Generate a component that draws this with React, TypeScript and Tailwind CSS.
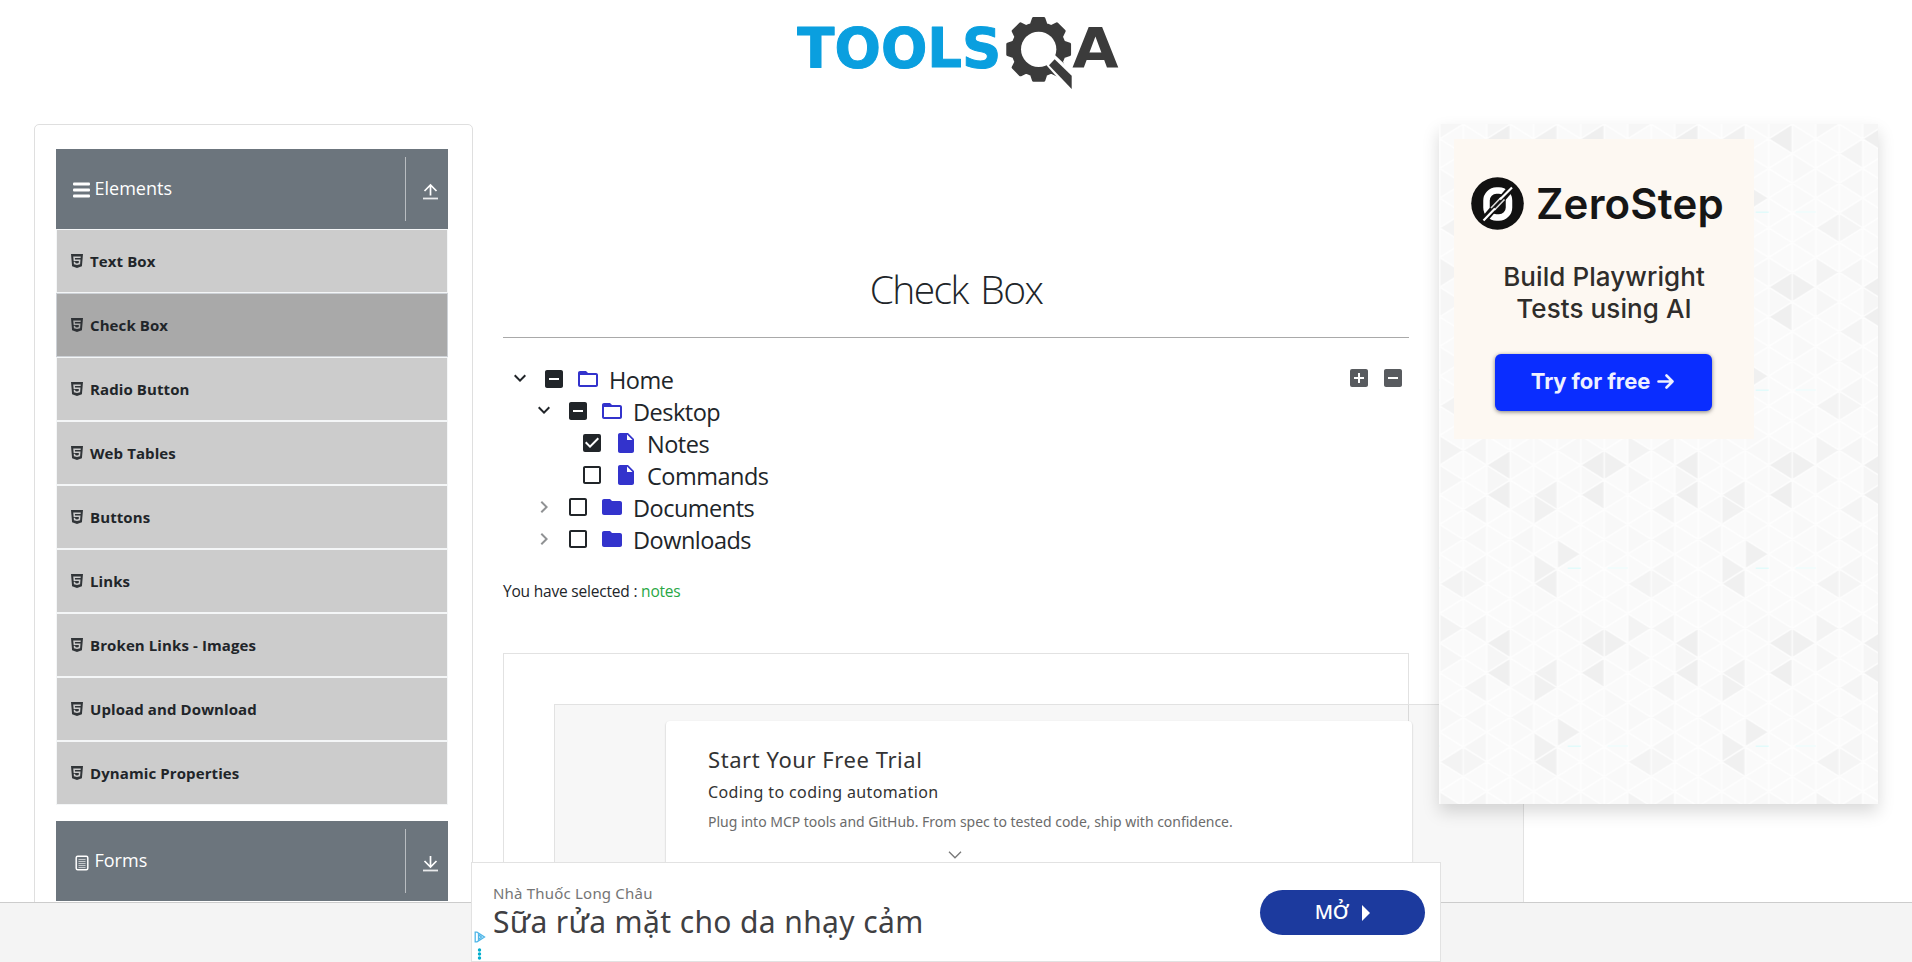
import React from "react";
import type { ReactNode } from "react";
import { FaHtml5 } from "react-icons/fa";
import {
  MdAddBox,
  MdCheckBox,
  MdCheckBoxOutlineBlank,
  MdChevronRight,
  MdFolder,
  MdFolderOpen,
  MdIndeterminateCheckBox,
  MdInsertDriveFile,
  MdKeyboardArrowDown,
} from "react-icons/md";

const gearPath = (() => {
  const cx = 776;
  const cy = 148;
  const body = 78;
  const tip = 94;
  const points: string[] = [];
  for (let i = 0; i < 8; i++) {
    const mid = -90 + i * 45;
    const corners: [number, number][] = [
      [mid - 16, body],
      [mid - 9.5, tip],
      [mid + 9.5, tip],
      [mid + 16, body],
    ];
    for (const [deg, r] of corners) {
      const a = (deg * Math.PI) / 180;
      points.push(`${(cx + r * Math.cos(a)).toFixed(1)} ${(cy + r * Math.sin(a)).toFixed(1)}`);
    }
  }
  return `M${points.join("L")}Z`;
})();

function Logo() {
  return (
    <svg className="mr-[-8px] h-[110px] w-[360px]" viewBox="0 0 1080 330" role="img" aria-label="TOOLSQA">
      <text
        x="52"
        y="200"
        textLength="612"
        lengthAdjust="spacingAndGlyphs"
        className="fill-[#0a9fdf] stroke-[#0a9fdf] font-['DejaVu_Sans',sans-serif] text-[163px] font-bold"
        strokeWidth="3"
        strokeLinejoin="round"
      >
        TOOLS
      </text>
      <path d={gearPath} fill="#3b3b3b" stroke="#3b3b3b" strokeWidth="9" strokeLinejoin="round" />
      <circle cx="776" cy="148" r="53" fill="#fff" />
      <path d="M796 192L824 164L888 224L876 282Z" fill="#fff" />
      <path d="M807 196L824 178L875 227V267Z" fill="#3b3b3b" />
      <text
        x="877"
        y="201"
        textLength="139"
        lengthAdjust="spacingAndGlyphs"
        className="fill-[#3b3b3b] font-['DejaVu_Sans',sans-serif] text-[167px] font-bold"
      >
        A
      </text>
    </svg>
  );
}

const arrowCls = "size-[17px] shrink-0";

function ArrowUp() {
  return (
    <svg className={arrowCls} viewBox="0 0 17 17" fill="none" stroke="#fff">
      <path d="M8.5 12.5V2M2.5 8L8.5 2L14.5 8" strokeWidth="1.7" />
      <path d="M1 15.5H16" strokeWidth="1.8" opacity=".85" />
    </svg>
  );
}

function ArrowDown() {
  return (
    <svg className={arrowCls} viewBox="0 0 17 17" fill="none" stroke="#fff">
      <path d="M8.5 1V12M2.5 6L8.5 12L14.5 6" strokeWidth="1.7" />
      <path d="M1 15.5H16" strokeWidth="1.8" opacity=".85" />
    </svg>
  );
}

function MenuHeader({ icon, label, arrow }: { icon: ReactNode; label: string; arrow: ReactNode }) {
  return (
    <div className="flex h-20 shrink-0 items-center bg-[#6c757d] text-white">
      <div className="ml-[15px] flex w-[21px] shrink-0 justify-center pt-[2px]">{icon}</div>
      <span className="ml-[2.5px] flex-1 pb-[3px] text-lg leading-7">{label}</span>
      <div className="flex h-16 w-[43px] items-center border-l border-[#b9bdc1] pt-[4px] pl-[16px]">{arrow}</div>
    </div>
  );
}

const menuItems = [
  "Text Box",
  "Check Box",
  "Radio Button",
  "Web Tables",
  "Buttons",
  "Links",
  "Broken Links - Images",
  "Upload and Download",
  "Dynamic Properties",
];

function Sidebar() {
  return (
    <aside className="flex h-[900px] w-[439px] shrink-0 flex-col rounded-[5px] border border-[#dfdfdf] pt-6 pr-6 pl-[21px]">
      <MenuHeader
        label="Elements"
        arrow={<ArrowUp />}
        icon={
          <svg className="h-4 w-[17px]" viewBox="0 0 17 16" fill="#fff">
            <rect y=".5" width="17" height="3" rx="1" />
            <rect y="6.5" width="17" height="3" rx="1" />
            <rect y="12.5" width="17" height="3" rx="1" />
          </svg>
        }
      />
      <ul className="mb-4">
        {menuItems.map((item) => (
          <li
            key={item}
            className={
              item === "Check Box"
                ? "flex h-16 items-center border border-[#cdd1d6] bg-[#a9a9a9] pl-[14px]"
                : "flex h-16 items-center border border-[#f4f6f7] bg-[#ccc] pl-[14px]"
            }
          >
            <FaHtml5 className="h-4 w-3 opacity-90" />
            <span className="ml-[7px] text-[15px] leading-6 font-bold tracking-[0.1px]">{item}</span>
          </li>
        ))}
      </ul>
      <MenuHeader
        label="Forms"
        arrow={<ArrowDown />}
        icon={
          <svg className="mt-px h-4 w-[14px]" viewBox="0 0 14 16" fill="none" stroke="#fff">
            <rect x="1.2" y="1.2" width="11.6" height="13.6" rx="1.5" strokeWidth="1.5" />
            <path d="M3.5 4.5H10.5M3.5 6.5H10.5M3.5 8.5H10.5M3.5 10.5H10.5M3.5 12.5H10.5" opacity=".6" />
          </svg>
        }
      />
    </aside>
  );
}

type Check = "half" | "on" | "off";

interface TreeRow {
  label: string;
  indent: string;
  arrow?: "open" | "closed";
  check: Check;
  icon: "open" | "folder" | "file";
}

const treeRows: TreeRow[] = [
  { label: "Home", indent: "pl-[5px]", arrow: "open", check: "half", icon: "open" },
  { label: "Desktop", indent: "pl-[29px]", arrow: "open", check: "half", icon: "open" },
  { label: "Notes", indent: "pl-[77px]", check: "on", icon: "file" },
  { label: "Commands", indent: "pl-[77px]", check: "off", icon: "file" },
  { label: "Documents", indent: "pl-[29px]", arrow: "closed", check: "off", icon: "folder" },
  { label: "Downloads", indent: "pl-[29px]", arrow: "closed", check: "off", icon: "folder" },
];

const checkIcons = {
  half: MdIndeterminateCheckBox,
  on: MdCheckBox,
  off: MdCheckBoxOutlineBlank,
};

const nodeIcons = {
  open: MdFolderOpen,
  folder: MdFolder,
  file: MdInsertDriveFile,
};

function TreeItem({ row }: { row: TreeRow }) {
  const CheckIcon = checkIcons[row.check];
  const NodeIcon = nodeIcons[row.icon];
  return (
    <li className={`flex h-8 items-start ${row.indent}`}>
      {row.arrow === "open" && <MdKeyboardArrowDown className="mt-[3px] mr-[10px] size-6" />}
      {row.arrow === "closed" && <MdChevronRight className="mt-1 mr-[10px] size-6 text-[#909294]" />}
      <CheckIcon className="mt-1 size-6" />
      <NodeIcon className="mt-1 ml-[10px] size-6 text-[#33c]" />
      <span className="ml-[9px] pt-px text-[23.5px] leading-8 tracking-[-0.5px]">{row.label}</span>
    </li>
  );
}

function TrialAd() {
  return (
    <div className="h-[400px] border border-[#e2e2e2] pt-[50px] pl-[50px] font-['Noto_Sans',sans-serif]">
      <div className="h-[300px] w-[970px] border border-[#e2e2e2] bg-black/3 pt-4 pl-[111px]">
        <div className="h-[280px] w-[746px] rounded-[4px] bg-white pt-6 pl-[42px] shadow-[0_1px_2px_rgba(0,0,0,0.28)]">
          <h2 className="text-[22px] leading-7 font-[450] tracking-[0.56px] text-[#333]">Start Your Free Trial</h2>
          <h3 className="mt-[7px] text-base leading-6 font-[450] tracking-[0.38px] text-[#333]">
            Coding to coding automation
          </h3>
          <p className="mt-2 text-sm leading-5 tracking-[-0.02px] text-[#6b6b6b]">
            Plug into MCP tools and GitHub. From spec to tested code, ship with confidence.
          </p>
          <svg className="mt-[19px] ml-[240px] h-2 w-[14px]" viewBox="0 0 14 8" fill="none" stroke="#777" strokeWidth="1.3">
            <path d="M1 .8L7 6.8L13 .8" />
          </svg>
        </div>
      </div>
    </div>
  );
}

function Content() {
  return (
    <section className="ml-[30px] flex w-[906px] shrink-0 flex-col pt-[141px]">
      <h1 className="text-center text-[39px] leading-[48px] font-light tracking-[-1.6px] [word-spacing:4px]">Check Box</h1>
      <hr className="mt-6 border-t border-[#a9a9a9]" />
      <div className="mt-[25px] flex items-start justify-between">
        <ul>
          {treeRows.map((row) => (
            <TreeItem key={row.label} row={row} />
          ))}
        </ul>
        <div className="mt-[3px] mr-1 flex gap-[10px] text-[#585b5f]">
          <MdAddBox className="size-6" />
          <MdIndeterminateCheckBox className="size-6" />
        </div>
      </div>
      <p className="mt-6 mb-[50px] text-[15.5px] leading-6 tracking-[-0.2px]">
        You have selected : <span className="text-[#28a745]">notes</span>
      </p>
      <TrialAd />
    </section>
  );
}

const COL = 23.5;
const STEP = 178 / 6;

/* Triangles of the backdrop tile: column, apex height, side the apex points to, tone. */
const tones: [number, number, "L" | "R", string][] = [
  [2, 14.8, "L", "#efefef"],
  [4, 14.8, "L", "#f1f1f1"],
  [6, 14.8, "L", "#efefef"],
  [7, 14.8, "R", "#f9f9f9"],
  [1, 29.7, "L", "#f4f4f4"],
  [4, 29.7, "R", "#f1f1f1"],
  [3, 29.7, "L", "#f8f8f8"],
  [2, 44.5, "R", "#fafafa"],
  [5, 44.5, "R", "#f9f9f9"],
  [7, 44.5, "R", "#f8f8f8"],
  [0, 59.3, "R", "#f8f8f8"],
  [1, 59.3, "L", "#f7f7f7"],
  [3, 59.3, "L", "#f7f7f7"],
  [3, 74.2, "R", "#f9f9f9"],
  [5, 74.2, "R", "#f0f0f0"],
  [6, 74.2, "L", "#fafafa"],
  [7, 74.2, "R", "#f9f9f9"],
  [1, 89, "L", "#f6f6f6"],
  [4, 89, "R", "#f1f1f1"],
  [2, 89, "R", "#fafafa"],
  [0, 103.8, "L", "#f3f3f3"],
  [1, 103.8, "R", "#f5f5f5"],
  [4, 103.8, "L", "#f0f0f0"],
  [3, 118.7, "L", "#f9f9f9"],
  [4, 118.7, "R", "#f9f9f9"],
  [7, 118.7, "L", "#f9f9f9"],
  [5, 133.5, "R", "#f9f9f9"],
  [0, 148.3, "R", "#f3f3f3"],
  [1, 148.3, "L", "#f5f5f5"],
  [3, 148.3, "L", "#f9f9f9"],
  [4, 148.3, "R", "#f9f9f9"],
  [5, 148.3, "L", "#f8f8f8"],
  [6, 148.3, "R", "#f8f8f8"],
  [2, 163.2, "L", "#efefef"],
  [3, 163.2, "R", "#f9f9f9"],
  [6, 163.2, "L", "#efefef"],
  [7, 163.2, "R", "#f0f0f0"],
  [0, 178, "R", "#f6f6f6"],
  [2, 178, "R", "#f6f6f6"],
  [4, 178, "R", "#f9f9f9"],
  [5, 178, "L", "#f9f9f9"],
  [6, 178, "R", "#f8f8f8"],
  [0, 0, "R", "#f6f6f6"],
  [2, 0, "R", "#f6f6f6"],
  [4, 0, "R", "#f9f9f9"],
  [5, 0, "L", "#f9f9f9"],
  [6, 0, "R", "#f8f8f8"],
];

function triangle(col: number, y: number, side: "L" | "R") {
  const left = col * COL;
  const right = left + COL;
  const apex = side === "L" ? left : right;
  const base = side === "L" ? right : left;
  return `M${apex} ${y}L${base} ${y - STEP / 2}V${y + STEP / 2}Z`;
}

const gridLines = (() => {
  let d = "";
  for (let c = 0; c <= 8; c++) d += `M${c * COL} 0V178`;
  for (let c = 0; c < 8; c++) {
    const a = c % 2 === 0 ? STEP / 2 : 0;
    const b = c % 2 === 0 ? 0 : STEP / 2;
    for (let k = -1; k <= 7; k++) {
      d += `M${c * COL} ${a + k * STEP}L${(c + 1) * COL} ${b + k * STEP}`;
      d += `M${c * COL} ${a + k * STEP}L${(c + 1) * COL} ${b + (k + (c % 2 === 0 ? 1 : -1)) * STEP}`;
    }
  }
  return d;
})();

function Backdrop() {
  return (
    <svg className="absolute inset-0 size-full" aria-hidden="true">
      <defs>
        <pattern id="tile" x="0.7" width="188" height="178" patternUnits="userSpaceOnUse">
          <rect width="188" height="178" fill="#fafafa" />
          {tones.map(([col, y, side, fill], i) => (
            <path key={i} d={triangle(col, y, side)} fill={fill} />
          ))}
          <path d={gridLines} stroke="#fff" strokeWidth="1.5" opacity=".75" fill="none" />
          <rect x="128" y="87.5" width="13" height="1.5" fill="#e2fbfb" />
          <rect x="168" y="87" width="20" height="2" fill="#f2fcfc" />
        </pattern>
      </defs>
      <rect width="100%" height="100%" fill="url(#tile)" />
    </svg>
  );
}

function ZeroStepAd() {
  return (
    <div className="relative flex size-[300px] flex-col items-center bg-[#fdf8f2] pt-[39px] font-['Inter',sans-serif] text-[#2f2d2b]">
      <div className="flex w-full items-center pl-[17px]">
        <svg className="mt-[-2px] size-[53px]" viewBox="0 0 53 53" fill="none">
          <circle cx="26.5" cy="26.5" r="26.3" fill="#111" />
          <rect x="15.5" y="13.5" width="22.5" height="27" rx="10" stroke="#fff" strokeWidth="6.5" />
          <path d="M13 43L41 10" stroke="#111" strokeWidth="7" />
          <path d="M12.5 43.5L24 31.5M29 22.500L41 10.500" stroke="#fff" strokeWidth="2.2" />
          <path d="M20 31L30 20.500M23.500 33L33.500 22.500" stroke="#fff" strokeWidth="1.6" opacity=".85" />
        </svg>
        <span className="ml-3 pb-[2px] text-[42px] leading-[51px] font-semibold tracking-[0.2px] text-[#161616]">ZeroStep</span>
      </div>
      <p className="mt-[30px] text-center text-[26px] leading-8 font-medium tracking-[0.08px]">
        Build Playwright
        <br />
        Tests using AI
      </p>
      <div className="mt-[29px] mr-[2px] flex h-[57px] w-[217px] items-center justify-center rounded-[6px] bg-[#0a2dff] pb-[3px] text-[22px] font-bold tracking-[-0.1px] text-[#eef0ff] shadow-[0_1px_4px_rgba(0,0,0,0.5)]">
        Try for free
        <svg className="mr-px ml-[7px] size-[17px]" viewBox="0 0 17 17" fill="none" stroke="#eef0ff" strokeWidth="2.6" strokeLinecap="round" strokeLinejoin="round">
          <path d="M1.5 8.5H15.5M9.5 2.5L15.5 8.5L9.5 14.5" />
        </svg>
      </div>
    </div>
  );
}

function BottomBanner() {
  return (
    <div className="absolute bottom-0 left-[471px] flex h-[100px] w-[970px] items-start justify-between border border-[#e2e2e2] bg-white pl-[21px] font-['Noto_Sans',sans-serif]">
      <div className="pt-5">
        <p className="text-[15px] leading-5 tracking-[0.2px] text-[#757575]">Nhà Thuốc Long Châu</p>
        <p className="mt-px text-[30px] leading-9 tracking-[0.38px] text-[#3f4043]">Sữa rửa mặt cho da nhạy cảm</p>
      </div>
      <div className="mt-[27px] mr-[15px] flex h-[45px] w-[165px] items-center justify-center rounded-full bg-[#1c3a9e] text-white">
        <span className="pb-[2px] text-[20px] leading-7 font-medium tracking-[-0.3px]">MỞ</span>
        <svg className="ml-[14px] h-4 w-2" viewBox="0 0 8 16" fill="#fff">
          <path d="M0 0L8 8L0 16Z" />
        </svg>
      </div>
      <svg className="absolute bottom-0 left-[2px] h-[30px] w-3" viewBox="0 0 12 30" fill="none">
        <path d="M1.2 1.2V10.8H3L10.5 6L3 1.2ZM4.5 3.8V8.2L7.5 6Z" stroke="#4fb6e8" strokeWidth="1.3" />
        <circle cx="5.5" cy="19" r="1.7" fill="#00aecd" />
        <circle cx="5.5" cy="23" r="1.7" fill="#00aecd" />
        <circle cx="5.5" cy="27" r="1.7" fill="#00aecd" />
      </svg>
    </div>
  );
}

export default function App() {
  return (
    <div className="flex h-[962px] w-[1912px] flex-col overflow-hidden bg-white font-['Open_Sans','Noto_Sans',sans-serif] text-[#212529]">
      <header className="flex h-[124px] shrink-0 justify-center">
        <Logo />
      </header>
      <main className="flex min-h-0 flex-1 items-start pl-[34px]">
        <Sidebar />
        <Content />
        <div className="relative ml-[30px] h-[680px] w-[439px] shrink-0 bg-[#fafafa] p-[15px] shadow-[0_8px_16px_rgba(0,0,0,0.15)]">
          <Backdrop />
          <ZeroStepAd />
        </div>
      </main>
      <footer className="relative z-10 h-[60px] shrink-0 border-t border-[#ccc] bg-[#f4f4f4]">
        <BottomBanner />
      </footer>
    </div>
  );
}
